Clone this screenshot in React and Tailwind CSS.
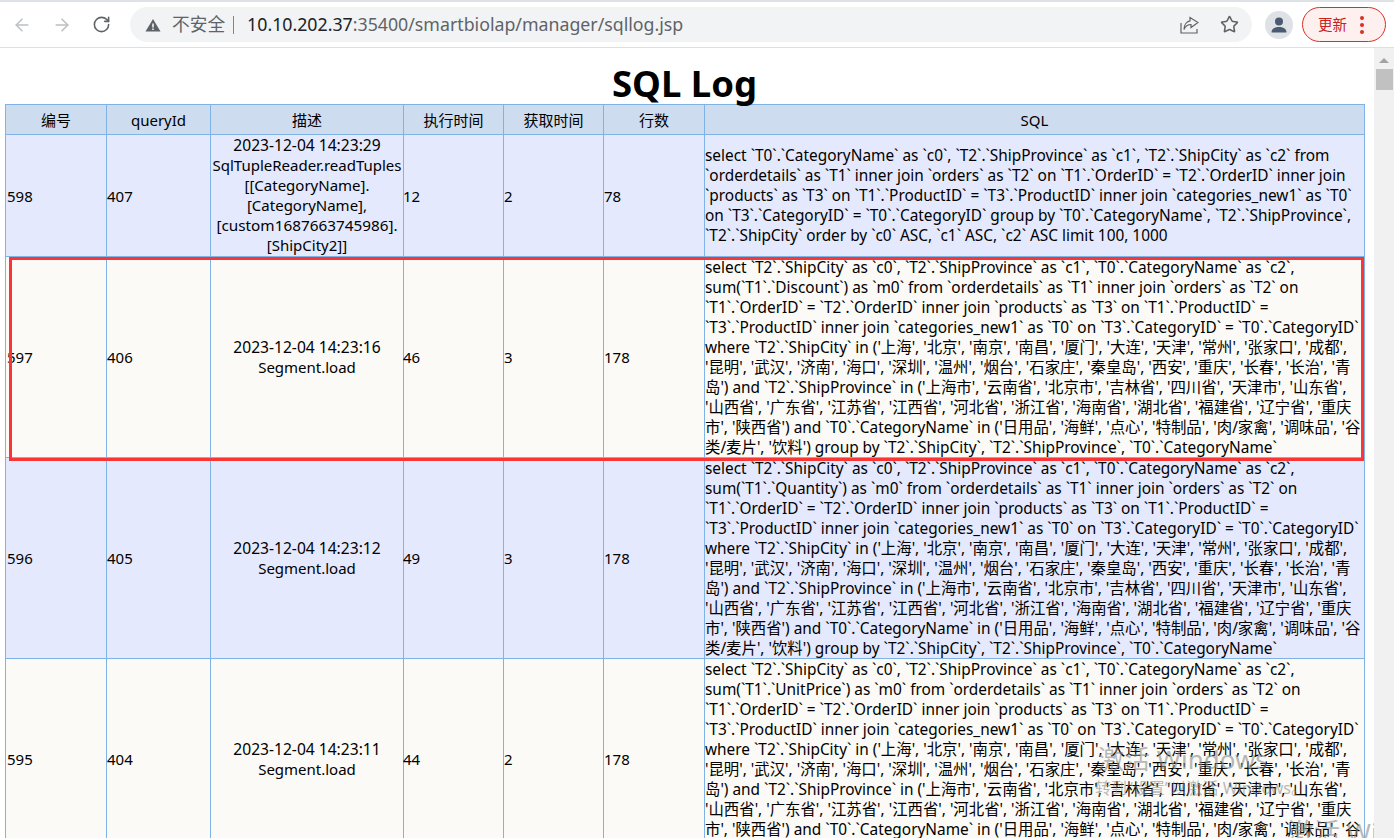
import React from 'react';
import { ArrowLeft, ArrowRight, RotateCw, Star } from 'lucide-react';

const columns = [
  { label: '编号', width: 'w-[101px]' },
  { label: 'queryId', width: 'w-[104px]' },
  { label: '描述', width: 'w-[193px]' },
  { label: '执行时间', width: 'w-[100px]' },
  { label: '获取时间', width: 'w-[100px]' },
  { label: '行数', width: 'w-[101px]' },
  { label: 'SQL', width: 'w-[660px]' }
];

const shared = [
  "`T1`.`OrderID` = `T2`.`OrderID` inner join `products` as `T3` on `T1`.`ProductID` =",
  "`T3`.`ProductID` inner join `categories_new1` as `T0` on `T3`.`CategoryID` = `T0`.`CategoryID`",
  "where `T2`.`ShipCity` in ('上海', '北京', '南京', '南昌', '厦门', '大连', '天津', '常州', '张家口', '成都',",
  "'昆明', '武汉', '济南', '海口', '深圳', '温州', '烟台', '石家庄', '秦皇岛', '西安', '重庆', '长春', '长治', '青",
  "岛') and `T2`.`ShipProvince` in ('上海市', '云南省', '北京市', '吉林省', '四川省', '天津市', '山东省',",
  "'山西省', '广东省', '江苏省', '江西省', '河北省', '浙江省', '海南省', '湖北省', '福建省', '辽宁省', '重庆",
  "市', '陕西省') and `T0`.`CategoryName` in ('日用品', '海鲜', '点心', '特制品', '肉/家禽', '调味品', '谷",
  "类/麦片', '饮料') group by `T2`.`ShipCity`, `T2`.`ShipProvince`, `T0`.`CategoryName`"
];

const head = "select `T2`.`ShipCity` as `c0`, `T2`.`ShipProvince` as `c1`, `T0`.`CategoryName` as `c2`,";
const joinEnd = " as `m0` from `orderdetails` as `T1` inner join `orders` as `T2` on";

const rows = [
  {
    id: 598, queryId: 407, exec: 12, fetch: 2, count: 78,
    desc: ['2023-12-04 14:23:29', 'SqlTupleReader.readTuples', '[[CategoryName].', '[CategoryName],', '[custom1687663745986].', '[ShipCity2]]'],
    sql: [
      "select `T0`.`CategoryName` as `c0`, `T2`.`ShipProvince` as `c1`, `T2`.`ShipCity` as `c2` from",
      "`orderdetails` as `T1` inner join `orders` as `T2` on `T1`.`OrderID` = `T2`.`OrderID` inner join",
      "`products` as `T3` on `T1`.`ProductID` = `T3`.`ProductID` inner join `categories_new1` as `T0`",
      "on `T3`.`CategoryID` = `T0`.`CategoryID` group by `T0`.`CategoryName`, `T2`.`ShipProvince`,",
      "`T2`.`ShipCity` order by `c0` ASC, `c1` ASC, `c2` ASC limit 100, 1000"
    ]
  },
  {
    id: 597, queryId: 406, exec: 46, fetch: 3, count: 178,
    desc: ['2023-12-04 14:23:16', 'Segment.load'],
    sql: [head, 'sum(`T1`.`Discount`)' + joinEnd, ...shared]
  },
  {
    id: 596, queryId: 405, exec: 49, fetch: 3, count: 178,
    desc: ['2023-12-04 14:23:12', 'Segment.load'],
    sql: [head, 'sum(`T1`.`Quantity`)' + joinEnd, ...shared]
  },
  {
    id: 595, queryId: 404, exec: 44, fetch: 2, count: 178,
    desc: ['2023-12-04 14:23:11', 'Segment.load'],
    sql: [head, 'sum(`T1`.`UnitPrice`)' + joinEnd, ...shared]
  }
];

// digits run wider in the reference, so lines full of them get a slightly bigger size
const lineSize = (line) => {
  if (/^\d{4}-/.test(line)) return 'text-[15.6px]';
  if (line.startsWith('[custom')) return 'text-[15.3px]';
  return 'text-[15px]';
};

const Lines = ({ items }) => items.map((line, i) => (
  <span key={i} className={`block whitespace-nowrap ${lineSize(line)}`}>{line}</span>
));

const Toolbar = () => (
  <div className="h-[48px] shrink-0 bg-white border-b border-[#dedfe1] border-t-2 border-t-[#dee1e6] flex items-center">
    <ArrowLeft size={20} strokeWidth={1.8} className="ml-[12px] text-[#bcbfc3]" />
    <ArrowRight size={20} strokeWidth={1.8} className="ml-[20px] text-[#bcbfc3]" />
    <RotateCw size={19} strokeWidth={2} className="ml-[20px] text-[#5f6368]" />
    <div className="ml-[19px] w-[1122px] h-[35px] rounded-full bg-[#f1f3f4] flex items-center">
      <svg width="16" height="16" viewBox="0 0 16 16" className="ml-[15px] text-[#5f6368]">
        <path d="M8 2 L15.5 14.5 H0.5 Z M7.2 6.5 V10.5 H8.8 V6.5 Z M7.2 11.5 V13 H8.8 V11.5 Z" fill="currentColor" fillRule="evenodd" />
      </svg>
      <span className="ml-[11px] text-[#5f6368] text-[17.7px]">不安全</span>
      <span className="ml-[8px] w-px h-[18px] bg-[#80868b]" />
      <span className="ml-[13px] text-[17.75px] text-[#202124]">
        10.10.202.37<span className="text-[#5f6368]">:35400/smartbiolap/manager/sqllog.jsp</span>
      </span>
      <svg width="20" height="20" viewBox="0 0 20 20" fill="none" stroke="#5f6368" strokeWidth="1.2" className="ml-auto">
        <path d="M2 8 V18 H18 V14" />
        <path d="M11 2.5 L19 7.5 L12 12.5 V9.5 C8.5 9.5 6.5 11 5 14.5 C5 10 7.5 6.5 11 5.8 Z" />
      </svg>
      <Star size={19} strokeWidth={2} className="ml-[21px] mr-[13px] text-[#5f6368]" />
    </div>
    <div className="ml-[13px] w-[28px] h-[28px] rounded-full bg-[#dee1e6] flex items-center justify-center">
      <svg width="18" height="18" viewBox="0 0 18 18" fill="#4a5a70">
        <circle cx="9" cy="5.5" r="4" />
        <path d="M1.5 16.5 C1.5 12.5 5 11 9 11 C13 11 16.5 12.5 16.5 16.5 Z" />
      </svg>
    </div>
    <div className="ml-[9px] w-[84px] h-[35px] rounded-full border border-[#d93025] bg-[#fdf0ef] flex items-center text-[#c5221f] text-[14.5px]">
      <span className="ml-[15px]">更新</span>
      <span className="ml-[13px] flex flex-col gap-[3px]">
        <span className="w-[4px] h-[4px] rounded-full bg-[#d93025]" />
        <span className="w-[4px] h-[4px] rounded-full bg-[#d93025]" />
        <span className="w-[4px] h-[4px] rounded-full bg-[#d93025]" />
      </span>
    </div>
  </div>
);

const LogTable = () => (
  <table className="ml-[5px] w-[1359px] table-fixed border-collapse text-[15px] leading-[20px] text-black">
    <thead>
      <tr className="h-[30px] bg-[#cedcf0]">
        {columns.map((col) => (
          <th key={col.label} className={`${col.width} border border-[#7fb2e5] font-normal text-center p-0`}>{col.label}</th>
        ))}
      </tr>
    </thead>
    <tbody>
      {rows.map((row, index) => (
        <tr key={row.id} className={`${index % 2 === 0 ? 'bg-[#e4e9fd]' : 'bg-[#fbfaf6]'} ${index === 0 ? 'h-[122px]' : ''}`}>
          <td className="border border-[#7fb2e5] px-px py-0">{row.id}</td>
          <td className="border border-[#7fb2e5] px-0 py-0">{row.queryId}</td>
          <td className={`border border-[#7fb2e5] px-0 py-0 text-center ${index === 0 ? 'align-top' : ''}`}><Lines items={row.desc} /></td>
          <td className="border border-[#7fb2e5] px-0 py-0 indent-[-1px]">{row.exec}</td>
          <td className="border border-[#7fb2e5] px-0 py-0">{row.fetch}</td>
          <td className="border border-[#7fb2e5] px-0 py-0">{row.count}</td>
          <td className="border border-[#7fb2e5] px-0 py-0 text-[15.4px]">
            {row.sql.map((line, i) => (
              <span key={i} className={`block whitespace-nowrap ${index > 0 ? 'translate-y-px' : ''}`}>{line}</span>
            ))}
          </td>
        </tr>
      ))}
    </tbody>
  </table>
);

const Scrollbar = () => (
  <div className="w-[20px] shrink-0 bg-[#f1f1f1] flex flex-col items-center">
    <div className="mt-[10px] w-0 h-0 border-x-[5px] border-x-transparent border-b-[5px] border-b-[#a3a3a3]" />
    <div className="mt-[6px] w-[17px] h-[21px] bg-[#c1c1c1]" />
  </div>
);

export default function App() {
  return (
    <div className="h-screen flex flex-col overflow-hidden bg-white font-['Noto_Sans','Noto_Sans_CJK_SC',sans-serif]">
      <Toolbar />
      <div className="flex-1 flex min-h-0">
        <div className="relative flex-1 min-w-0 overflow-hidden">
          <h1 className="h-[56px] pt-[12px] pr-[5px] text-center text-[36.5px] leading-[46px] font-bold text-black">SQL Log</h1>
          <LogTable />
          {/* annotation box from the screenshot */}
          <div className="absolute left-[9px] top-[209px] w-[1355px] h-[204px] border-[3px] border-[#f93535]" />
          {/* Windows activation watermark */}
          <div className="absolute left-[1098px] top-[696px] text-[26px] leading-[30px] text-[#8a8a8a]/60 whitespace-nowrap">激活 Windows</div>
          <div className="absolute left-[1095px] top-[730px] text-[16px] leading-[20px] text-[#8a8a8a]/60 whitespace-nowrap">转到“设置”以激活 Windows。</div>
          <div className="absolute left-[1288px] top-[769px] text-[26px] leading-[30px] text-[#8a8a8a]/60 whitespace-nowrap">激活 Win</div>
        </div>
        <Scrollbar />
      </div>
    </div>
  );
}
